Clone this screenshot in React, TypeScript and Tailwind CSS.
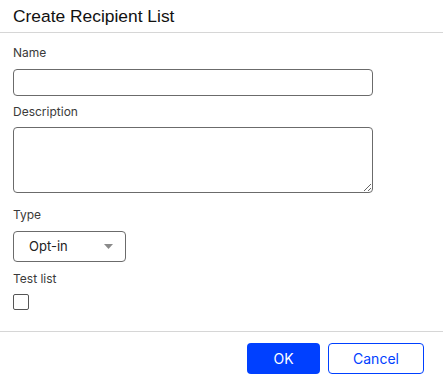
export default function App() {
  return (
    <div className="w-[443px] h-[385px] bg-white flex flex-col font-['Inter','Liberation_Sans',sans-serif]">
      <div className="h-[33px] px-[13px] pt-[5px] border-b border-[#d6d6d6]">
        <h1 className="text-[17.4px] leading-[22px] text-[#111] font-['Liberation_Sans',sans-serif]">
          Create Recipient List
        </h1>
      </div>
      <div className="flex flex-col px-[13px] pt-[11px] h-[299px] border-b border-[#d6d6d6]">
        <label className="text-[12px] leading-[18px] text-[#3a3a3a]">Name</label>
        <input
          type="text"
          className="mt-[7px] w-[360px] h-[27px] rounded-[4px] border border-[#6b6b6b] outline-none px-2 text-[13px]"
        />
        <label className="mt-[7px] text-[12px] leading-[18px] text-[#3a3a3a]">Description</label>
        <textarea className="mt-[6px] w-[360px] h-[66px] rounded-[4px] border border-[#6b6b6b] outline-none px-2 text-[13px] block" />
        <label className="mt-[13px] text-[12px] leading-[18px] text-[#3a3a3a]">Type</label>
        <div className="mt-[7px] w-[113px] h-[31px] rounded-[4px] border border-[#6b6b6b] flex items-center justify-between pl-[15px] pr-[12px]">
          <span className="text-[13px] text-[#222]">Opt-in</span>
          <svg width="9" height="5" viewBox="0 0 9 5" aria-hidden="true">
            <path d="M0 0h9L4.5 5z" fill="#8a8a8a" />
          </svg>
        </div>
        <label className="mt-[8px] text-[12px] leading-[18px] text-[#3a3a3a]">Test list</label>
        <div className="mt-[6px] w-[16px] h-[16px] rounded-[2px] border border-[#555]" />
      </div>
      <div className="flex justify-end gap-[8px] pt-[11px] pr-[19px]">
        <button className="w-[73px] h-[31px] rounded-[4px] bg-[#0040ff] text-white text-[14px]">OK</button>
        <button className="w-[96px] h-[31px] rounded-[4px] border border-[#0040ff] text-[#0040ff] text-[14px] bg-white">
          Cancel
        </button>
      </div>
    </div>
  );
}
